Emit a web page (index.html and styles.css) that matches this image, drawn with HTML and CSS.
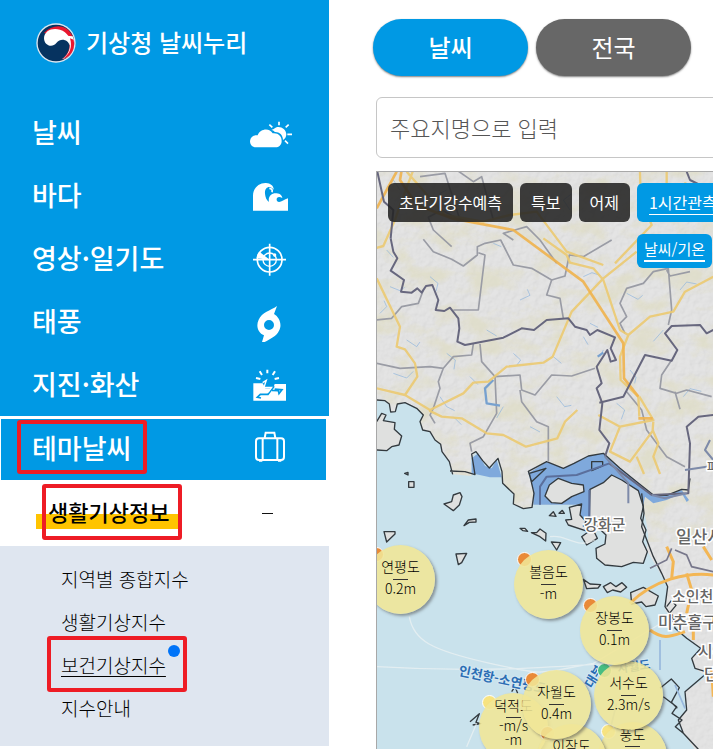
FILE: index.html
```html
<!DOCTYPE html>
<html lang="ko">
<head>
<meta charset="utf-8">
<meta name="viewport" content="width=device-width, initial-scale=1">
<title>기상청 날씨누리</title>
<link rel="stylesheet" href="styles.css">
</head>
<body>
<div class="page">
  <aside class="sidebar">
    <div class="sidebar-top">
      <a class="brand" href="#">
        <svg class="brand-mark" viewBox="0 0 120 120" aria-hidden="true">
          <circle cx="60" cy="60" r="59" fill="#dfe7f0"/>
          <circle cx="60" cy="60" r="55" fill="#063360"/>
          <path d="M24 30C50 2 92 2 109 38C122 68 104 100 78 109C100 90 106 66 96 44Z" fill="#e9172f"/>
          <path d="M78 109C104 91 108 64 92 38L110 40C124 70 106 104 78 109Z" fill="#fff"/>
          <path d="M113 50C120 82 100 104 80 108C104 92 109 70 102 46Z" fill="#e9172f"/>
          <path d="M24 45C25 23 49 13 72 20C95 27 105 46 101 67C96 50 75 43 61 60C49 76 24 68 24 45Z" fill="#fff"/>
        </svg>
        <span>기상청 날씨누리</span>
      </a>
      <nav class="menu" aria-label="주 메뉴">
        <a class="menu-item" href="#"><span>날씨</span>
          <svg class="menu-icon" viewBox="60 34 126 126" aria-hidden="true"><path d="M78 143C66 143 60 134 60 124C61 113 70 106 83 107C90 86 119 83 128 101C144 99 155 109 155 124C155 136 146 143 137 143Z" fill="#fff"/><path d="M131 88C144 75 168 84 169 104C169 112 165 118 159 121C159 105 147 96 134 97C133 94 129 92 124 91Z" fill="#fff"/><path d="M147 66v11M118 75l9 8M176 75l-9 8M172 104h14M165 123l9 9" stroke="#fff" stroke-width="5"/></svg></a>
        <a class="menu-item" href="#"><span>바다</span>
          <svg class="menu-icon" viewBox="60 223 126 126" aria-hidden="true"><path d="M69 333V288C69 265 87 249 108 250C122 250 132 260 131 270C121 255 103 261 105 282C106 293 110 302 117 307C113 290 126 279 140 281C151 282 157 289 157 295C144 287 137 295 141 304C149 312 160 300 174 296V333Z" fill="#fff"/><path d="M118 266q11 1 8 12" fill="none" stroke="#fff" stroke-width="5"/></svg></a>
        <a class="menu-item" href="#"><span>영상·일기도</span>
          <svg class="menu-icon" viewBox="60 412 126 126" aria-hidden="true"><g fill="none" stroke="#fff" stroke-width="5"><circle cx="119" cy="480" r="37"/><circle cx="119" cy="480" r="20" stroke-width="4"/><path d="M119 432v96M69 480h99"/></g><path d="M119 480L80 476Q80 464 88 456Z" fill="#fff"/><circle cx="134" cy="466" r="5" fill="#fff"/></svg></a>
        <a class="menu-item" href="#"><span>태풍</span>
          <svg class="menu-icon" viewBox="60 31 126 126" aria-hidden="true"><path fill-rule="evenodd" d="M141 49L132 73C149 83 157 106 147 123C138 144 111 150 94 164L102 137C84 130 77 109 86 90C96 68 121 63 141 49ZM117 91A15 15 0 1 0 117 121A15 15 0 1 0 117 91Z" fill="#fff"/></svg></a>
        <a class="menu-item" href="#"><span>지진·화산</span>
          <svg class="menu-icon" viewBox="60 220 126 126" aria-hidden="true"><path d="M70 281H98L106 296H130L134 283H168V333H70Z" fill="#fff"/><path d="M97 267L107 262L121 279L111 292L130 293L114 314H91L82 323L93 325M126 302L145 303L147 312L156 300L134 298" fill="none" stroke="#0099e4" stroke-width="5"/><path d="M98 279L109 272L102 293H125L114 308" fill="none" stroke="#fff" stroke-width="4"/><path d="M112 240v11M89 245l7 11M135 245l-7 11M78 265l13 3M147 265l-13 3" stroke="#fff" stroke-width="6"/></svg></a>
      </nav>
    </div>
    <a class="menu-item menu-item-active" href="#"><span class="marked">테마날씨</span>
      <svg class="menu-icon" viewBox="60 415 126 126" aria-hidden="true"><g fill="none" stroke="#fff" stroke-width="6"><rect x="78" y="449" width="84" height="65" rx="9"/><path d="M98 449v65M142 449v65M104 448l3-16h26l3 16"/><path d="M87 516h10M144 516h10" stroke-width="7"/></g></svg></a>
    <div class="section-head">
      <a class="section-title marked" href="#">생활기상정보</a>
      <button class="fold" type="button" aria-label="접기"></button>
    </div>
    <nav class="submenu" aria-label="생활기상정보">
      <a href="#">지역별 종합지수</a>
      <a href="#">생활기상지수</a>
      <a class="marked current" href="#" aria-current="page">보건기상지수</a>
      <a href="#">지수안내</a>
    </nav>
  </aside>

  <main class="content">
    <div class="tabs">
      <button class="tab tab-on" type="button">날씨</button>
      <button class="tab" type="button">전국</button>
    </div>
    <input class="search" type="text" placeholder="주요지명으로 입력" aria-label="주요지명으로 입력">
    <section class="map" aria-label="관측 지도">
      <svg class="map-base" viewBox="377 172 400 640" aria-hidden="true">
        <defs>
          <filter id="relief" x="0" y="0" width="100%" height="100%">
            <feTurbulence type="fractalNoise" baseFrequency="0.03 0.045" numOctaves="5" seed="8"/>
            <feColorMatrix values="0 0 0 0 .74  0 0 0 0 .72  0 0 0 0 .55  3.6 0 0 0 -1.65"/>
          </filter>
          <filter id="grain" x="0" y="0" width="100%" height="100%">
            <feTurbulence type="fractalNoise" baseFrequency="0.16" numOctaves="3" seed="3" result="n"/>
            <feDiffuseLighting in="n" surfaceScale="1.6" lighting-color="#fff"><feDistantLight azimuth="225" elevation="60"/></feDiffuseLighting>
          </filter>
        </defs>
        <rect x="377" y="172" width="400" height="640" fill="#e0e0e0"/>
        <rect x="377" y="172" width="400" height="640" filter="url(#grain)" opacity=".16"/>
        <rect x="377" y="172" width="400" height="370" filter="url(#relief)" opacity=".7"/>

        <g transform="translate(370 390) scale(.33333)" stroke-linejoin="round">
          <g fill="none" stroke="#8db4dc" stroke-width="2.5" opacity=".8">
            <path d="M30-230l20-20-8-18M60-310l30 12 14-10M180-340l24 20-6 24M110-150l30 20 10-14M230-110l26 20-4 28M210 20l20 30 24 12M70-50l40 14 20-20M450-270l30-14-8-18M640-340l26-12 24 8M430-110l22 20-12 16M550-100l24 20M640-160l14 24M770-290l34 18 14-12M930-300l20-24 30 6M880-180l-30 34M940 20l20-24 34 8M560 20l24 30 20-4M740 40l24 20-10 28M780-60l18 22-4 18M400 50l-20 34M250 80l24 24M600-540l-20-30 24-18M370-440l24 10M220-560l-10-30 20-10M90-600l-20-30M50-420l20 22M840-400l24 14M920-370l30-14M350-180l30 18M660-200l24 12M300-40l24 24M480 110l30 16M700-120l-10 20"/>
          </g>
          <path fill="#c9e2ec" d="M20 30L45 32 58 42 62 66 76 65 82 42 105 38 140 55 160 75 150 95 158 120 180 125 195 150 212 163 216 185 238 215 248 253 305 258 303 205 318 185 338 212 358 234 384 205 396 245 398 280 432 312 430 342 460 356 488 352 490 344H655V300H820L815 345 828 390 835 440 830 480 865 540 893 590 885 660 915 700 935 725 992 775 965 805 975 835 1010 860 945 905 950 960 925 990 940 1030 975 1078H20Z"/>
          <path fill="#7fa9dc" d="M305 205L325 190 345 228 365 235 380 210 395 262 360 262 305 250Z"/>
          <path fill="#7fa9dc" d="M475 250L530 215 580 235 612 220 655 198 700 190 750 235 800 275 850 315 890 316 935 300 957 330 950 336 935 310 890 330 850 340 825 320 820 345H658V384H630V344H490V300Z"/>
          <g fill="#dfe0df" stroke="#333a3f" stroke-width="4">
            <path d="M20 95L35 70 48 75 40 92 75 98 73 118 95 138 87 165 65 170 50 182 20 180"/>
            <path d="M660 298L700 278 725 255 755 270 805 302 820 350 812 385 828 420 818 455 832 485 820 520 790 517 755 530 705 525 680 505 678 475 705 462 708 435 690 418 658 388Z"/>
            <path d="M538 285L565 265 605 280 640 285 642 305 605 320 575 340 545 338 525 318Z"/>
            <path d="M598 352L635 342 630 375 648 395 640 408 670 420 682 445 650 465 635 440 655 425 595 405 587 390 605 388Z"/>
            <path d="M222 342L245 335 250 315 270 308 276 320 268 345 250 362ZM282 407L295 390 318 387 318 396 298 397ZM42 425H75V432L50 456ZM258 492L290 490 275 518 265 524ZM116 275H132V292H116ZM104 250l10-3v8ZM538 377l12-12 8 14ZM567 370l10-9 6 9ZM484 428L500 428 510 417 528 430 527 453 510 440ZM450 415l15 0 8 9-14-2ZM544 456L572 458 560 480Z"/>
            <path d="M640 568L660 582 692 584 684 594 650 596ZM700 590L722 578 738 590 756 578 770 592 752 606 728 600 712 608ZM782 608L820 592 865 618 855 645 828 650 815 636 785 642Z"/>
          </g>
          <g fill="none" stroke="#333a3f" stroke-width="4">
            <path d="M20 30L45 32 58 42 62 66 76 65 82 42 105 38 140 55 160 75 150 95 158 120 180 125 195 150 212 163 216 185 238 215 248 253M240 243L285 245 315 254 305 192 318 185 338 212 358 234 384 205 396 245 398 280 432 312 430 342 460 356 486 352 492 310 478 250 528 235 485 275 475 244 530 215 580 235 612 220 655 198 700 190 750 235 800 275 850 315 890 316 935 298 955 300 960 265"/>
            <path d="M815 310L822 370 815 410 850 500 875 550 893 590 885 650 912 690 915 715 950 745 992 775 965 805 975 835 1025 850M890 650l14-18 14 14-18 22 16 16-14 14M870 895l34-28 24 26-24 44 18 18M1010 850L945 905 950 960 925 990 940 1030 985 1078M880 920l40 30-14 20 30 20-20 20 24 20M300 995l28-24-10 26 14 4-24 4M425 905l10-15 8 20"/>
            <path d="M665 215H698V228L665 242Z"/>
          </g>
          <path d="M510 344V290L530 260 620 255 718 220M658 300V384" fill="none" stroke="#5b6f9c" stroke-width="6"/>
          <g fill="none" stroke="#f1f4f5" stroke-width="4" opacity=".65">
            <path d="M118 680C130 750 180 780 360 820S500 850 670 820L890 690M20 830C350 850 560 830 800 815M320 1000L290 1070M540 440C590 430 620 480 675 450"/>
          </g>
        </g>

        <g transform="translate(370 240) scale(.33333)" fill="none" stroke-linejoin="round">
          <g stroke="#9a9ca5" stroke-width="5">
            <path d="M160-2L190 35 245 58 280 78 322 45V20L345 10 392 0 430 75 485 85 545 120 585 108 598 45 640 50 725 0"/>
            <path d="M325 38L345 45 325 210 250 210M545 120L530 165 570 175 580 235M20 240L65 235 95 200 145 190 160 150M310 312L305 345 250 350 220 385 180 380 90 385 20 370M220 385L205 425 210 445 190 505 180 525 195 550M330 312L335 365 375 410 450 405 455 450 495 465 545 405 605 408 675 385M375 410L380 520 340 590 300 610 305 635M450 450L455 485 500 545 535 560V665"/>
            <path d="M765 280L750 250 770 230 750 190 770 145 820 130 850 95 895 85 905 210 895 255M890 90L900 108 960 95M905 360L875 405 870 445 920 460 950 450 1025 470M915 455L930 508M770 455L815 510 830 570 890 650 945 680"/>
            <path d="M150-190L225-200 270-60 215-90 175-68 190-30 245 20M190-270L210-230 260-210 310-175 335-190 370-60M430 0L400-20 470-40 510 0 560 70"/>
          </g>
          <path d="M370 420L345 445 350 490 390 497M683 350L700 338" stroke="#77a1cf" stroke-width="7"/>
          <g stroke="#ecca72" stroke-width="7" opacity=".9">
            <path d="M20 115L90 260 80 320 105 328 135 370 142 410 105 465 20 445M105 465L180 510 280 460 310 428 355 425 410 380 520 368 548 350 605 215 700 115 800 35"/>
            <path d="M520-5L590 45 600 68 670 85 700 120 750 270 775 285 840 230 910 215 945 155 1030 110M775 285L750 350 752 420 805 470 808 530"/>
            <path d="M178 512L215 530 275 535 350 580 400 585 468 620 562 595 585 545 622 510M685 525L750 560 850 540 808 470M750 560L720 635 780 665 850 570M800 650L822 702M850 545L848 570 865 610 850 650 870 702"/>
            <path d="M-5 30L40 18 75-60 92-110 130-210M110-205L145-165 225-75 340-55 420-75 500-85 590 35 700 75M810-205L812-130 845-45 735 70M890-210L890-120 945-170 1030-130"/>
          </g>
          <g stroke="#efb34d" stroke-width="8" opacity=".9"><path d="M20-95L80-205M95-210L90-180 140-105 245-65 430-30 640 125 760 310 762 415 805 470M805 535H848"/></g>
          <g stroke="#67677e" stroke-width="6">
            <path d="M62-5L70 35 82 55 62 92 102 120 93 155 125 158 142 145 155 158 168 138 187 135 205 180 197 210 223 213 240 203 265 235 268 265 262 305 285 315 400 293 455 265 492 270 530 240 595 235 615 260 650 270 660 285 682 270 735 292 722 325 738 360 722 365 712 330 680 380 695 430 680 445 697 490 688 570 718 610 705 650"/>
            <path d="M688 488L760 470 825 345 905 362 922 330 885 280 905 258 990 255 1010 280 1030 270M718 670L845 765 955 760 960 610 950 560 985 530 1030 525"/>
            <path d="M22-205L42-115 70-90 62-5M950-205L960-180 990-165 990-130 1010-95 1030-60"/>
          </g>
          <g stroke="#7d8aa9" stroke-width="6"><path d="M705 650L775 730V790M845 765L885 775 950 760M945 690L1010 680M1030 660L1005 630 1020 600"/></g>
        </g>

        <g transform="translate(370 540) scale(.33333)" fill="none" stroke-width="9">
          <path d="M780 190C850 120 950 95 1030 105M840 270C880 300 900 290 945 275M890 20L910 65 905 115M950 220L965 150 950 100M1000 20L1025 60M970 300V260M1025 390L1030 470" stroke="#f3b654"/>
          <path d="M905 25L890 60 840 85M915 30L950 45 965 80 1030 95" stroke="#77778b" stroke-width="5"/>
          <path d="M870 300V390M915 435l30 70M720 570L740 490" stroke="#98b8dd" stroke-width="5"/>
        </g>

        <g class="place">
          <text x="584" y="530" font-size="15">강화군</text>
          <text x="676" y="543" font-size="17">일산서구</text>
          <text x="672" y="602" font-size="15">소인천구</text>
          <text x="658" y="628" font-size="16">미추홀구</text>
          <text x="698" y="657" font-size="16">시흥</text>
          <text x="704" y="680" font-size="16">단원</text>
          <text x="707" y="472" font-size="12">파주</text>
        </g>
        <g class="sea-name">
          <text transform="translate(458 675) rotate(12)" font-size="13">인천항-소연평도</text>
          <text transform="translate(592 689) rotate(-58)" font-size="13">대부</text>
          <text transform="translate(618 673) rotate(-8)" font-size="12">자월도</text>
        </g>
      </svg>

      <div class="map-tools">
        <div class="tool-row">
          <button class="tool" type="button">초단기강수예측</button>
          <button class="tool" type="button">특보</button>
          <button class="tool" type="button">어제</button>
          <div class="tool-stack">
            <button class="tool tool-on" type="button"><span>1시간관측</span></button>
            <button class="tool tool-on tool-small" type="button"><span>날씨/기온</span></button>
          </div>
        </div>
      </div>

      <div class="pin pin-yeonpyeong orange"><div class="bubble"><b>연평도</b><span>0.2m</span></div></div>
      <div class="pin pin-boreum orange"><div class="bubble"><b>볼음도</b><span>-m</span></div></div>
      <div class="pin pin-pung yellow"><div class="bubble tall"><b>풍도</b></div></div>
      <div class="pin pin-seosu green"><div class="bubble"><b>서수도</b><span>2.3m/s</span></div></div>
      <div class="pin pin-jangbong orange"><div class="bubble"><b>장봉도</b><span>0.1m</span></div></div>
      <div class="pin pin-deokjeok yellow"><div class="bubble tall"><b>덕적도</b><span>-m/s</span><span>-m</span></div></div>
      <div class="pin pin-ijak orange"><div class="bubble"><b>이작도</b></div></div>
      <div class="pin pin-jawol orange"><div class="bubble"><b>자월도</b><span>0.4m</span></div></div>
    </section>
  </main>
</div>
</body>
</html>
```
FILE: styles.css
```css
:root {
  --blue: #0099e4;
  --red: #ee1c25;
}

* { box-sizing: border-box; }

body {
  margin: 0;
  background: #fff;
  color: #000;
  font-family: "Noto Sans CJK KR", sans-serif;
  overflow: hidden;
}

a { color: inherit; text-decoration: none; }

button {
  margin: 0;
  padding: 0;
  border: 0;
  font: inherit;
}

.page {
  display: grid;
  grid-template-columns: 329px 1fr;
  height: 100vh;
}

/* Sidebar */
.sidebar-top { background: var(--blue); }

.brand {
  display: flex;
  align-items: center;
  gap: 10px;
  height: 101px;
  padding: 0 36px 16px;
  color: #fff;
  font-size: 24px;
  font-weight: 500;
}

.brand span { padding-bottom: 2px; }

.brand-mark { width: 40px; height: 40px; }

.menu-item {
  display: flex;
  align-items: center;
  justify-content: space-between;
  height: 63px;
  padding: 0 37px 2px 32px;
  color: #fff;
  font-size: 27px;
  font-weight: 500;
  line-height: 40px;
}

.menu-icon { width: 42px; height: 42px; }

.menu-item-active {
  height: 61px;
  margin: 3px 3px 0 1px;
  padding: 0 34px 4px 31px;
  background: var(--blue);
}

.marked { position: relative; }

.marked::after {
  content: "";
  position: absolute;
  inset: -8px -16px -6px -15px;
  border: 4px solid var(--red);
  border-radius: 3px;
}

.section-head {
  display: flex;
  align-items: center;
  justify-content: space-between;
  height: 66px;
  padding: 0 50px 0 36px;
}

.section-title {
  padding: 0 12px 4px;
  font-size: 22px;
  font-weight: 500;
  line-height: 32px;
  background: linear-gradient(#ffc400, #ffc400) 0 19px / 100% 15px no-repeat;
}

.section-title::after { inset: -11px -1px -9px 6px; }

.fold {
  width: 24px;
  height: 24px;
  background: linear-gradient(#111, #111) center / 11px 1px no-repeat;
}

.submenu {
  display: flex;
  flex-direction: column;
  align-items: flex-start;
  padding: 11px 61px 17px;
  background: #dfe6f0;
  font-size: 19px;
  font-weight: 300;
  line-height: 43px;
}

.current {
  text-decoration: underline;
  text-underline-offset: 3px;
}

.current::before {
  content: "";
  position: absolute;
  top: 2px;
  right: -14px;
  width: 12px;
  height: 12px;
  border-radius: 50%;
  background: #0074f8;
}

.current::after { inset: -7px -21px -6px -14px; }

/* Content */
.content {
  display: flex;
  flex-direction: column;
  min-width: 0;
  min-height: 0;
  padding: 19px 0 0 47px;
}

.tabs {
  display: flex;
  gap: 8px;
  margin-left: -3px;
}

.tab {
  flex: none;
  width: 155px;
  height: 57px;
  padding-bottom: 2px;
  border-radius: 29px;
  background: #676767;
  box-shadow: 0 1px 2px rgba(0, 0, 0, .5);
  color: #fff;
  font-size: 24px;
  font-weight: 400;
}

.tab-on { background: var(--blue); font-weight: 500; }

.search {
  flex: none;
  width: calc(100% + 20px);
  height: 61px;
  margin: 21px 0 13px;
  padding: 0 13px 2px;
  border: 1px solid #c6c6c6;
  border-radius: 6px;
  font: 300 22px "Noto Sans CJK KR", sans-serif;
}

.search::placeholder { color: #555; }

.map {
  position: relative;
  flex: 1;
  min-height: 0;
  border: 1px solid #a8a8a8;
  border-width: 1px 0 0 1px;
  overflow: hidden;
}

.map-base { display: block; width: 400px; height: 640px; }

.place {
  fill: #666;
  stroke: #fff;
  stroke-width: 3px;
  paint-order: stroke;
  font-weight: 500;
}

.sea-name {
  fill: #2a6db4;
  stroke: #d5e8f2;
  stroke-width: 2px;
  paint-order: stroke;
  font-weight: 700;
}

.map-tools { position: absolute; top: 11px; left: 11px; }

.tool-row, .tool-stack { display: flex; align-items: flex-start; }
.tool-row { gap: 7px; }
.tool-stack { flex-direction: column; gap: 12px; }

.tool {
  height: 39px;
  padding: 0 11px 2px;
  border-radius: 6px;
  background: rgba(35, 35, 35, .88);
  color: #fff;
  font-size: 16px;
  line-height: 24px;
  white-space: nowrap;
}

.tool-on { padding: 0 12px; background: var(--blue); }
.tool-on span { display: block; border-bottom: 1px solid #fff; }
.tool-small { height: 34px; padding: 0 7px 2px; font-size: 15px; line-height: 22px; }
.tool-small span { border-bottom-width: 2px; }

/* Map pins, placed at the centre of each bubble */
.pin { position: absolute; width: 0; height: 0; }

.pin::before {
  content: "";
  position: absolute;
  top: -32px;
  left: -32px;
  width: 13px;
  height: 13px;
  border: 1px solid #fff;
  border-radius: 50%;
  background: #e98a38;
}

.green::before { background: #47be82; }
.yellow::before { background: #f7e380; }

.bubble {
  position: absolute;
  top: -34px;
  left: -35px;
  width: 69px;
  height: 69px;
  padding-top: 10px;
  border-radius: 50%;
  background: rgba(240, 230, 150, .88);
  box-shadow: 2px 2px 3px rgba(70, 70, 70, .5);
  font-size: 14px;
  font-weight: 300;
  text-align: center;
}

.bubble b {
  display: block;
  padding-bottom: 3px;
  font-weight: 300;
  line-height: 22px;
  background: linear-gradient(#333, #333) center bottom / 15px 1px no-repeat;
}

.bubble span { display: block; line-height: 17px; }
.tall { padding-top: 1px; }
.tall b { padding-bottom: 2px; }
.tall span { line-height: 14px; }

.pin-yeonpyeong { left: 24px; top: 407px; }
.pin-boreum { left: 172px; top: 412px; }
.pin-pung { left: 256px; top: 584px; }
.pin-seosu { left: 252px; top: 523px; }
.pin-jangbong { left: 238px; top: 458px; }
.pin-deokjeok { left: 137px; top: 555px; }
.pin-ijak { left: 195px; top: 586px; }
.pin-jawol { left: 180px; top: 532px; }
```
